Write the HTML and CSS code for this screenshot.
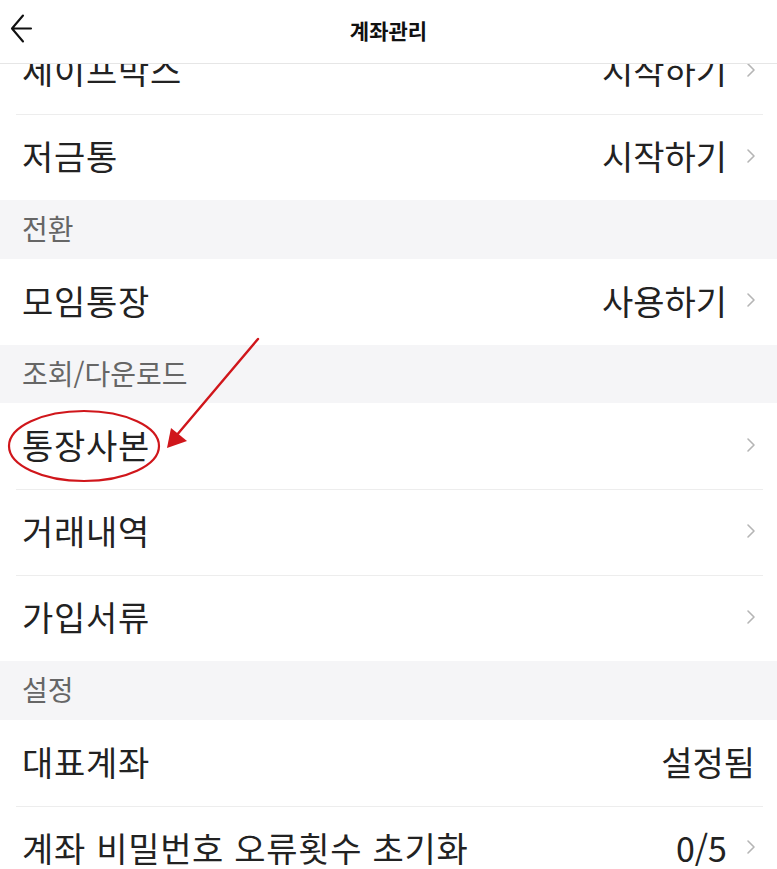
FILE: index.html
```html
<!DOCTYPE html>
<html lang="ko">
<head>
	<meta charset="UTF-8">
	<title>계좌관리</title>
	<link rel="stylesheet" href="styles.css">
</head>
<body>

<div id="screen">
	<header class="top-bar">
		<span class="back-btn">
			<svg width="30" height="30" viewBox="0 0 30 30">
				<path d="M4 15.5H23M15 2.5L4 15.5l11 13" fill="none" stroke="#111" stroke-width="2.1" stroke-linecap="round" stroke-linejoin="round"/>
			</svg>
		</span>
		<h1>계좌관리</h1>
	</header>

	<main class="scroll-area">
		<div class="menu-list">
			<div class="menu-row">
				<span class="row-label">세이프박스</span>
				<span class="row-value">시작하기<svg class="chevron" viewBox="0 0 10 16"><path d="M2 2l6 6-6 6"/></svg></span>
			</div>
			<div class="menu-row">
				<span class="row-label">저금통</span>
				<span class="row-value">시작하기<svg class="chevron" viewBox="0 0 10 16"><path d="M2 2l6 6-6 6"/></svg></span>
			</div>

			<div class="section-title">전환</div>
			<div class="menu-row">
				<span class="row-label">모임통장</span>
				<span class="row-value">사용하기<svg class="chevron" viewBox="0 0 10 16"><path d="M2 2l6 6-6 6"/></svg></span>
			</div>

			<div class="section-title">조회/다운로드</div>
			<div class="menu-row">
				<span class="row-label">통장사본</span>
				<span class="row-value"><svg class="chevron" viewBox="0 0 10 16"><path d="M2 2l6 6-6 6"/></svg></span>
			</div>
			<div class="menu-row">
				<span class="row-label">거래내역</span>
				<span class="row-value"><svg class="chevron" viewBox="0 0 10 16"><path d="M2 2l6 6-6 6"/></svg></span>
			</div>
			<div class="menu-row">
				<span class="row-label">가입서류</span>
				<span class="row-value"><svg class="chevron" viewBox="0 0 10 16"><path d="M2 2l6 6-6 6"/></svg></span>
			</div>

			<div class="section-title">설정</div>
			<div class="menu-row">
				<span class="row-label">대표계좌</span>
				<span class="row-value">설정됨</span>
			</div>
			<div class="menu-row">
				<span class="row-label">계좌 비밀번호 오류횟수 초기화</span>
				<span class="row-value">0/5<svg class="chevron" viewBox="0 0 10 16"><path d="M2 2l6 6-6 6"/></svg></span>
			</div>
		</div>
	</main>

	<!-- red marks drawn over the screenshot -->
	<svg id="marks" width="777" height="869" viewBox="0 0 777 869">
		<ellipse cx="84" cy="446" rx="75" ry="35" fill="none" stroke="#d0161b" stroke-width="2.2"/>
		<path d="M258 339L176 436" fill="none" stroke="#d0161b" stroke-width="2.4" stroke-linecap="round"/>
		<path d="M167 448L171 428L187 441Z" fill="#d0161b"/>
	</svg>
</div>

</body>
</html>
```

FILE: styles.css
```css
:root {
	--row-height: 86px;
	--section-height: 58.5px;
	--side-pad: 22px;
}

* {
	box-sizing: border-box;
}

body {
	margin: 0;
	font-family: "Noto Sans CJK KR", "Noto Sans", sans-serif;
	color: #222;
	background-color: #fff;
}

#screen {
	width: 777px;
	height: 869px;
	display: flex;
	flex-direction: column;
	overflow: hidden;
	position: relative;
}

.top-bar {
	height: 64px;
	flex-shrink: 0;
	display: flex;
	align-items: center;
	justify-content: center;
	padding-bottom: 4px;
	border-bottom: 1px solid #e6e6e6;
	background-color: #fff;
	position: relative;
	z-index: 1;
}

.back-btn {
	position: absolute;
	left: 8px;
	top: 13px;
	display: flex;
}

h1 {
	margin: 0;
	font-size: 21px;
	font-weight: 700;
	color: #111;
}

.scroll-area {
	flex: 1;
	overflow: hidden;
}

.menu-list {
	margin-top: -36px;
}

.menu-row {
	height: var(--row-height);
	display: flex;
	align-items: center;
	justify-content: space-between;
	padding: 0 var(--side-pad) 3px;
	font-size: 34px;
	position: relative;
}

.row-label {
	letter-spacing: 0.7px;
}

/* thin divider between rows, inset from the edges */
.menu-row + .menu-row::before {
	content: "";
	position: absolute;
	top: 0;
	left: 16px;
	right: 14px;
	height: 1px;
	background-color: #ededed;
}

.row-value {
	display: flex;
	align-items: center;
}

.chevron {
	width: 10px;
	height: 16px;
	margin-left: 19px;
	margin-right: -1px;
}

.chevron path {
	fill: none;
	stroke: #b5b5b5;
	stroke-width: 1.6;
	stroke-linecap: round;
	stroke-linejoin: round;
}

.section-title {
	height: var(--section-height);
	display: flex;
	align-items: center;
	padding: 0 var(--side-pad) 2px;
	background-color: #f5f5f7;
	font-size: 28px;
	color: #666;
}

#marks {
	position: absolute;
	top: 0;
	left: 0;
	pointer-events: none;
	z-index: 2;
}
```
